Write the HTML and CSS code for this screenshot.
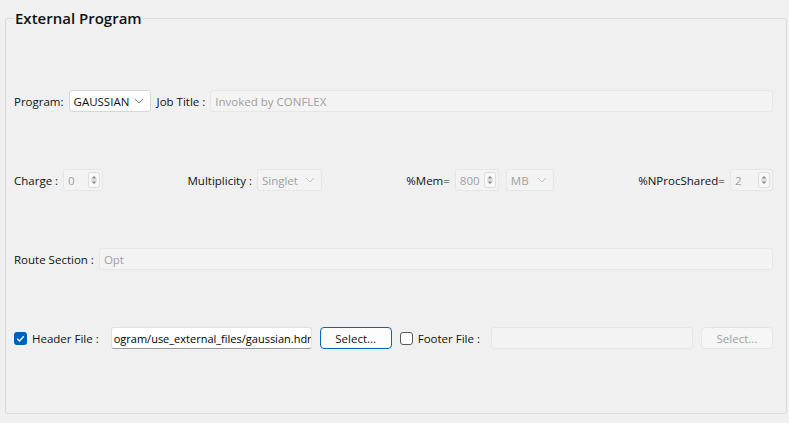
FILE: index.html
```html
<!DOCTYPE html>
<html lang="en">
<head>
    <meta charset="UTF-8">
    <meta name="viewport" content="width=device-width, initial-scale=1.0">
    <title>External Program</title>
    <link rel="stylesheet" href="styles.css">
</head>
<body>
    <fieldset class="group">
        <legend>External Program</legend>
        <div class="rows">
            <div class="row">
                <span class="label">Program:</span>
                <div class="combo program">
                    <span>GAUSSIAN</span>
                    <svg class="chevron" width="10" height="6" viewBox="0 0 10 6"><polyline points="1,1 5,5 9,1" fill="none" stroke="#7a7a7a" stroke-width="1"/></svg>
                </div>
                <span class="label">Job Title :</span>
                <div class="edit disabled grow">Invoked by CONFLEX</div>
            </div>

            <div class="row spread">
                <div class="cell">
                    <span class="label">Charge :</span>
                    <div class="spin disabled charge">
                        <span>0</span>
                        <svg class="arrows" width="12" height="16" viewBox="0 0 12 16"><rect x="0.5" y="0.5" width="11" height="15" rx="2" fill="#f7f7f7" stroke="#dedede"/><polygon points="3.5,6.5 6,4 8.5,6.5" fill="#8a8a8a"/><line x1="3" y1="8" x2="9" y2="8" stroke="#c8c8c8"/><polygon points="3.5,9.5 6,12 8.5,9.5" fill="#8a8a8a"/></svg>
                    </div>
                </div>
                <div class="cell">
                    <span class="label">Multiplicity :</span>
                    <div class="combo disabled mult">
                        <span>Singlet</span>
                        <svg class="chevron" width="10" height="6" viewBox="0 0 10 6"><polyline points="1,1 5,5 9,1" fill="none" stroke="#c4c4c4" stroke-width="1"/></svg>
                    </div>
                </div>
                <div class="cell">
                    <span class="label">%Mem=</span>
                    <div class="spin disabled mem">
                        <span>800</span>
                        <svg class="arrows" width="12" height="16" viewBox="0 0 12 16"><rect x="0.5" y="0.5" width="11" height="15" rx="2" fill="#f7f7f7" stroke="#dedede"/><polygon points="3.5,6.5 6,4 8.5,6.5" fill="#8a8a8a"/><line x1="3" y1="8" x2="9" y2="8" stroke="#c8c8c8"/><polygon points="3.5,9.5 6,12 8.5,9.5" fill="#8a8a8a"/></svg>
                    </div>
                    <div class="combo disabled unit">
                        <span>MB</span>
                        <svg class="chevron" width="10" height="6" viewBox="0 0 10 6"><polyline points="1,1 5,5 9,1" fill="none" stroke="#c4c4c4" stroke-width="1"/></svg>
                    </div>
                </div>
                <div class="cell">
                    <span class="label">%NProcShared=</span>
                    <div class="spin disabled nproc">
                        <span>2</span>
                        <svg class="arrows" width="12" height="16" viewBox="0 0 12 16"><rect x="0.5" y="0.5" width="11" height="15" rx="2" fill="#f7f7f7" stroke="#dedede"/><polygon points="3.5,6.5 6,4 8.5,6.5" fill="#8a8a8a"/><line x1="3" y1="8" x2="9" y2="8" stroke="#c8c8c8"/><polygon points="3.5,9.5 6,12 8.5,9.5" fill="#8a8a8a"/></svg>
                    </div>
                </div>
            </div>

            <div class="row">
                <span class="label">Route Section :</span>
                <div class="edit disabled grow">Opt</div>
            </div>

            <div class="row">
                <span class="check checked">
                    <svg width="13" height="13" viewBox="0 0 13 13"><polyline points="3.3,6.8 5.5,9 9.8,4.2" fill="none" stroke="#fff" stroke-width="1.3"/></svg>
                </span>
                <span class="label header-label">Header File :</span>
                <div class="edit file">ogram/use_external_files/gaussian.hdr</div>
                <button class="button default">Select...</button>
                <span class="check"></span>
                <span class="label footer-label">Footer File :</span>
                <div class="edit disabled file footer"></div>
                <button class="button" disabled>Select...</button>
            </div>
        </div>
    </fieldset>
</body>
</html>
```

FILE: styles.css
```css
body {
    margin: 0;
    background-color: #f0f0f0;
    font-family: "Open Sans", "Noto Sans", sans-serif;
    font-size: 11.5px;
    color: #111;
}
.group {
    margin: 8px 7px 0 5px;
    padding: 0 13px 64px 8px;
    border: 1px solid #dadada;
    border-radius: 2px;
}
.group legend {
    padding: 0 1px;
    font-size: 15px;
    font-weight: 600;
    line-height: 20px;
    color: #111;
}
.rows {
    display: flex;
    flex-direction: column;
    gap: 57px;
    padding-top: 62px;
}
.row {
    display: flex;
    align-items: center;
    height: 22px;
}
.spread {
    justify-content: space-between;
}
.cell {
    display: flex;
    align-items: center;
}
.label {
    white-space: nowrap;
    margin-right: 5px;
}
.edit, .combo, .spin {
    box-sizing: border-box;
    height: 22px;
    display: flex;
    align-items: center;
    padding: 0 4px;
    border: 1px solid #d6d6d6;
    border-radius: 3px;
    background-color: #fff;
    white-space: nowrap;
    overflow: hidden;
}
.disabled {
    background-color: #f3f3f3;
    border-color: #e6e6e6;
    color: #a0a0a0;
}
.grow {
    flex: 1;
}
.combo {
    justify-content: space-between;
    padding-right: 6px;
}
.program {
    width: 82px;
    margin-right: 6px;
    color: #111;
}
.mult {
    width: 65px;
}
.unit {
    width: 48px;
    margin-left: 7px;
}
.spin {
    justify-content: space-between;
    padding-right: 2px;
}
.charge {
    width: 40px;
}
.mem {
    width: 44px;
}
.nproc {
    width: 43px;
}
.check {
    box-sizing: border-box;
    width: 13px;
    height: 13px;
    border: 1px solid #5a5a5a;
    border-radius: 3px;
    background-color: #fff;
    margin-right: 5px;
    display: flex;
}
.check.checked {
    border: none;
    background-color: #005fb8;
}
.header-label {
    margin-right: 12px;
}
.footer-label {
    margin-right: 11px;
}
.file {
    width: 201px;
    padding: 0 2px;
    font-size: 11px;
    color: #000;
    border-color: #e0e0e0;
    border-bottom-color: #9a9a9a;
}
.file.footer {
    width: 202px;
    border-color: #e6e6e6;
}
.button {
    box-sizing: border-box;
    height: 22px;
    width: 72px;
    margin: 0 8px;
    font: inherit;
    color: #111;
    background-color: #fdfdfd;
    border: 1px solid #d0d0d0;
    border-radius: 4px;
}
.button.default {
    border-color: #0067c0;
}
.button:disabled {
    margin-right: 0;
    background-color: #f5f5f5;
    border-color: #e5e5e5;
    color: #a0a0a0;
}
```
